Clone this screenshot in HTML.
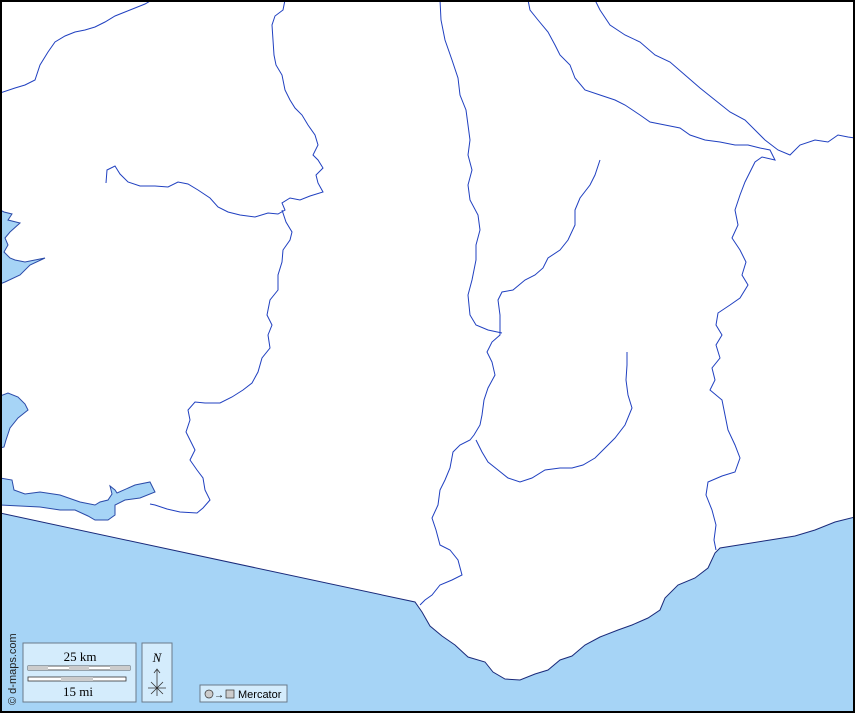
<!DOCTYPE html>
<html><head><meta charset="utf-8"><style>
html,body{margin:0;padding:0;background:#fff}
svg{display:block}
</style></head><body>
<svg width="855" height="713" viewBox="0 0 855 713" xmlns="http://www.w3.org/2000/svg">
<rect width="855" height="713" fill="#fff"/>
<!-- sea -->
<path d="M0,513 L415,602 L422,612 L430,626 L442,636 L455,645 L468,657 L485,662 L493,672 L505,679 L520,680 L535,674 L548,670 L560,660 L572,656 L585,645 L600,637 L618,630 L632,625 L648,618 L660,610 L665,598 L678,585 L695,578 L708,568 L715,553 L720,548 L745,544 L770,540 L795,536 L815,530 L835,522 L855,517 L855,713 L0,713 Z" fill="#a6d4f6" stroke="#1a2a7a" stroke-width="1"/>
<!-- lagoons -->
<g fill="#a6d4f6" stroke="#2a4aa8" stroke-width="1">
<path d="M0,210 L4,212 L12,214 L8,220 L20,223 L10,232 L5,238 L8,245 L4,252 L10,258 L15,260 L25,262 L45,258 L30,265 L20,275 L5,282 L0,284 Z"/>
<path d="M0,396 L8,393 L18,397 L25,404 L28,410 L18,418 L10,428 L6,440 L4,447 L0,448 Z"/>
<path d="M0,478 L12,480 L14,490 L25,494 L40,492 L60,495 L80,502 L95,505 L100,502 L108,500 L112,494 L110,486 L115,490 L117,493 L135,485 L150,482 L155,492 L140,498 L125,500 L115,505 L115,515 L108,520 L95,520 L88,516 L75,510 L60,510 L40,507 L20,506 L0,505 Z"/>
</g>
<!-- rivers -->
<g fill="none" stroke="#2040c0" stroke-width="1">
<path d="M0,93 L15,88 L25,85 L35,80 L40,65 L48,52 L55,42 L65,36 L75,32 L85,30 L95,27 L105,22 L115,16 L125,12 L135,8 L145,4 L152,0"/>
<path d="M285,0 L283,10 L275,16 L272,25 L273,40 L274,55 L276,65 L282,75 L285,90 L290,100 L295,108 L302,115 L308,125 L315,135 L318,145 L313,155 L318,160 L323,168 L316,175 L318,183 L323,192 L310,196 L300,200 L290,198 L282,203 L285,210 L278,214 L268,213 L255,217 L240,215 L228,212 L218,207 L210,198 L198,190 L188,184 L178,182 L168,187 L155,186 L140,186 L128,182 L120,174 L115,166 L107,170 L106,183"/>
<path d="M282,210 L286,222 L292,232 L290,240 L283,250 L282,262 L278,275 L278,290 L270,300 L267,315 L272,325 L268,335 L270,348 L262,358 L258,372 L252,383 L243,390 L232,397 L220,403 L205,403 L195,402 L188,410 L190,420 L186,432 L190,440 L195,450 L190,460 L197,470 L203,478 L205,490 L210,500 L203,508 L197,513 L180,512 L167,509 L155,505 L150,504"/>
<path d="M440,0 L441,20 L445,40 L452,60 L458,78 L460,95 L466,110 L468,125 L470,140 L468,155 L472,170 L468,185 L470,200 L478,215 L480,230 L476,245 L476,260 L472,280 L468,295 L470,315 L476,325 L488,330 L502,333"/>
<path d="M600,160 L595,175 L590,185 L580,198 L575,210 L575,225 L568,240 L560,250 L548,258 L543,268 L535,275 L525,280 L513,290 L502,292 L498,300 L500,315 L500,335 L492,342 L487,352 L492,362 L495,375 L488,388 L484,400 L482,415 L480,425 L474,435 L470,440 L460,445 L453,452 L450,468 L445,480 L440,490 L438,505 L432,518 L436,530 L440,545 L450,550 L458,560 L462,575 L452,580 L440,585 L432,595 L425,600 L420,605"/>
<path d="M476,440 L482,452 L488,462 L498,470 L508,478 L520,482 L532,478 L545,470 L560,468 L572,468 L583,465 L595,458 L605,448 L615,438 L625,425 L632,408 L628,395 L626,380 L627,365 L627,352"/>
<path d="M528,0 L530,10 L538,20 L548,32 L555,45 L560,55 L570,65 L575,78 L585,90 L600,95 L615,100 L625,105 L640,115 L650,122 L665,125 L680,128 L690,135 L705,140 L720,142 L735,145 L748,145 L760,148 L770,150 L775,160 L762,157 L755,162 L750,172 L745,182 L740,195 L735,210 L738,225 L732,238 L740,250 L746,262 L742,275 L748,285 L740,298 L730,305 L718,313 L716,325 L722,335 L716,345 L720,358 L712,368 L715,380 L710,390 L722,400 L725,415 L728,430 L735,445 L740,458 L735,472 L722,476 L708,482 L706,495 L712,510 L716,525 L714,540 L716,550"/>
<path d="M595,0 L600,10 L610,25 L625,35 L640,42 L655,55 L670,62 L685,75 L700,88 L715,100 L730,112 L745,120 L755,130 L765,140 L778,150 L790,155 L800,145 L815,140 L828,142 L838,135 L848,137 L855,138"/>
</g>
<!-- scale box -->
<rect x="23" y="643" width="113" height="59" fill="#d4ecfc" stroke="#6a7a8a"/>
<text x="80" y="661" font-family="Liberation Serif" font-size="13" text-anchor="middle">25 km</text>
<rect x="28" y="666" width="102" height="4" fill="#fff" stroke="#333" stroke-width="0.8"/>
<rect x="28" y="666" width="20" height="4" fill="#ccc"/><rect x="69" y="666" width="20" height="4" fill="#ccc"/><rect x="110" y="666" width="20" height="4" fill="#ccc"/>
<rect x="28" y="677" width="98" height="4" fill="#fff" stroke="#333" stroke-width="0.8"/>
<rect x="61" y="677" width="32" height="4" fill="#ccc"/>
<text x="78" y="696" font-family="Liberation Serif" font-size="13" text-anchor="middle">15 mi</text>
<rect x="142" y="643" width="30" height="59" fill="#d4ecfc" stroke="#6a7a8a"/>
<text x="157" y="662" font-family="Liberation Serif" font-size="13" font-style="italic" text-anchor="middle">N</text>
<path d="M157,670 V696 M148,688 H166 M151,682 L163,694 M163,682 L151,694 M154,673 L157,669 L160,673" stroke="#333" stroke-width="0.8" fill="none"/>
<rect x="200" y="685" width="87" height="17" fill="#d4ecfc" stroke="#6a7a8a"/>
<circle cx="209" cy="694" r="4" fill="#ccc" stroke="#333" stroke-width="0.7"/>
<text x="214" y="698" font-family="Liberation Sans" font-size="10">→</text>
<rect x="226" y="690" width="8" height="8" fill="#ccc" stroke="#333" stroke-width="0.7"/>
<text x="238" y="698" font-family="Liberation Sans" font-size="11">Mercator</text>
<text transform="translate(16,705) rotate(-90)" font-family="Liberation Sans" font-size="11" fill="#222">© d-maps.com</text>
<rect x="1" y="1" width="853" height="711" fill="none" stroke="#000" stroke-width="2"/>
</svg>
</body></html>
